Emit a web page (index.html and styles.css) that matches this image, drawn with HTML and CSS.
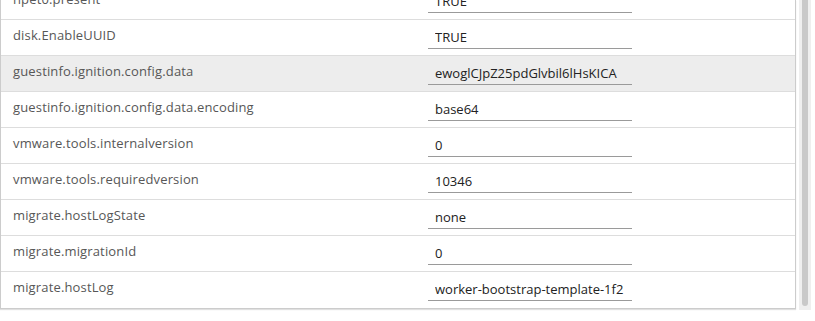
FILE: index.html
```html
<!DOCTYPE html>
<html lang="en">

<head>
    <meta charset="UTF-8">
    <meta name="viewport" content="width=device-width, initial-scale=1.0">
    <title>Configuration Parameters</title>
    <link rel="stylesheet" href="styles.css">
</head>

<body>

    <div class="view">
        <!-- Parameter grid, scrolled down a little -->
        <div class="grid-viewport">
            <div class="grid">
                <div class="row">
                    <div class="cell name">hpet0.present</div>
                    <div class="cell value"><input type="text" value="TRUE"></div>
                </div>
                <div class="row">
                    <div class="cell name">disk.EnableUUID</div>
                    <div class="cell value"><input type="text" value="TRUE"></div>
                </div>
                <div class="row selected">
                    <div class="cell name">guestinfo.ignition.config.data</div>
                    <div class="cell value"><input type="text" value="ewoglCJpZ25pdGlvbil6lHsKICA"></div>
                </div>
                <div class="row">
                    <div class="cell name">guestinfo.ignition.config.data.encoding</div>
                    <div class="cell value"><input type="text" value="base64"></div>
                </div>
                <div class="row">
                    <div class="cell name">vmware.tools.internalversion</div>
                    <div class="cell value"><input type="text" value="0"></div>
                </div>
                <div class="row">
                    <div class="cell name">vmware.tools.requiredversion</div>
                    <div class="cell value"><input type="text" value="10346"></div>
                </div>
                <div class="row">
                    <div class="cell name">migrate.hostLogState</div>
                    <div class="cell value"><input type="text" value="none"></div>
                </div>
                <div class="row">
                    <div class="cell name">migrate.migrationId</div>
                    <div class="cell value"><input type="text" value="0"></div>
                </div>
                <div class="row">
                    <div class="cell name">migrate.hostLog</div>
                    <div class="cell value"><input type="text" value="worker-bootstrap-template-1f2"></div>
                </div>
            </div>
        </div>

        <!-- Scrollbar -->
        <div class="scrollbar">
            <div class="thumb"></div>
        </div>
    </div>

</body>

</html>
```

FILE: styles.css
```css
body {
    font-family: "Open Sans", Arial, sans-serif;
    font-size: 13px;
    margin: 0;
    padding: 0;
    background-color: #fff;
}

.view {
    display: flex;
    align-items: flex-start;
    height: 321px;
    overflow: hidden;
}

.grid-viewport {
    width: 794px;
    height: 308px;
    overflow: hidden;
    border: 1px solid #ccc;
    border-top: none;
    box-shadow: 0 1px 1px rgba(0, 0, 0, 0.12);
}

/* scrolled down by 16px */
.grid {
    margin-top: -16px;
}

.row {
    display: flex;
    height: 35px;
    border-bottom: 1px solid #ddd;
    background-color: #fff;
}

.row:last-child {
    border-bottom: none;
}

.row.selected {
    background-color: #ededed;
}

.cell.name {
    width: 408px;
    padding: 6px 0 0 12px;
    color: #575757;
    letter-spacing: 0.15px;
}

.cell.value {
    padding: 4px 0 0 7px;
}

.cell.value input {
    width: 197px;
    height: 22px;
    padding: 2px 0 0 7px;
    margin: 0;
    border: none;
    border-bottom: 1px solid #9a9a9a;
    background: transparent;
    font-family: inherit;
    font-size: 13px;
    color: #222;
    outline: none;
}

.scrollbar {
    width: 12px;
    height: 310px;
    margin-left: 3px;
    background-color: #efefef;
    display: flex;
    justify-content: center;
}

.thumb {
    width: 6px;
    height: 306px;
    background-color: #c9c9c9;
    border-radius: 0 0 3px 3px;
}
```
